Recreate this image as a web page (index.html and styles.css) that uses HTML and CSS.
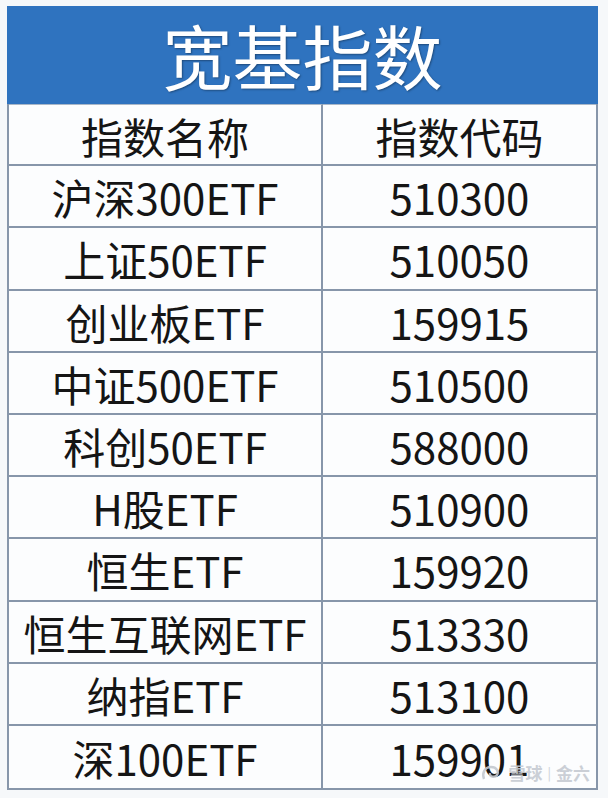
FILE: index.html
```html
<!DOCTYPE html>
<html lang="zh-CN">
<head>
<meta charset="utf-8">
<title>宽基指数</title>
<link rel="stylesheet" href="styles.css">
</head>
<body>
<div class="sheet">
  <div class="title">宽基指数</div>
  <div class="grid">
    <div class="cell">指数名称</div><div class="cell">指数代码</div>
    <div class="cell">沪深300ETF</div><div class="cell">510300</div>
    <div class="cell">上证50ETF</div><div class="cell">510050</div>
    <div class="cell">创业板ETF</div><div class="cell">159915</div>
    <div class="cell">中证500ETF</div><div class="cell">510500</div>
    <div class="cell">科创50ETF</div><div class="cell">588000</div>
    <div class="cell">H股ETF</div><div class="cell">510900</div>
    <div class="cell">恒生ETF</div><div class="cell">159920</div>
    <div class="cell">恒生互联网ETF</div><div class="cell">513330</div>
    <div class="cell">纳指ETF</div><div class="cell">513100</div>
    <div class="cell">深100ETF</div><div class="cell">159901</div>
  </div>
  <div class="mark">
    <svg class="mark-icon" width="22" height="18" viewBox="0 0 22 18"><path d="M3 15 C1 10 3 3 10 3 C16 3 18 8 16 11 C14 14 8 13 9 9" fill="none" stroke="#c3c8cf" stroke-width="2.4"/></svg>
    <span>雪球</span><span class="sep">|</span><span>金六</span>
  </div>
</div>
</body>
</html>
```

FILE: styles.css
```css
html, body {
  margin: 0;
  padding: 0;
  background: #f6f8fa;
}
body {
  font-family: "Noto Sans CJK SC", "Noto Sans", sans-serif;
  color: #151515;
}
.sheet {
  position: relative;
  margin: 6px 0 0 7px;
  width: 591px;
  box-sizing: border-box;
  border: 2px solid #8796aa;
  border-top: none;
  background: #fcfdfe;
}
.title {
  height: 98px;
  background: #2f73bf;
  color: #fff;
  font-size: 70px;
  line-height: 98px;
  text-align: center;
  text-shadow: 1px 1px 2px rgba(0, 0, 0, 0.35);
  margin: 0 -2px;
}
.grid {
  display: grid;
  grid-template-columns: 314px 1fr;
  grid-auto-rows: 62.2px;
}
.cell {
  box-sizing: border-box;
  border-bottom: 2px solid #8796aa;
  display: flex;
  align-items: center;
  justify-content: center;
  font-size: 42px;
  line-height: 1;
  padding-top: 2px;
}
.cell:nth-child(odd) {
  border-right: 2px solid #8796aa;
}
.grid .cell:nth-child(1),
.grid .cell:nth-child(2) {
  border-top: 1px solid #a9b7c8;
}
.grid .cell:nth-last-child(1),
.grid .cell:nth-last-child(2) {
  border-bottom: none;
}
.mark {
  position: absolute;
  right: 6px;
  bottom: 3px;
  display: flex;
  align-items: center;
  gap: 5px;
  color: #c6cbd2;
  font-size: 17px;
  font-weight: bold;
  opacity: 0.9;
}
.mark .sep {
  font-weight: normal;
  font-size: 13px;
}
```
